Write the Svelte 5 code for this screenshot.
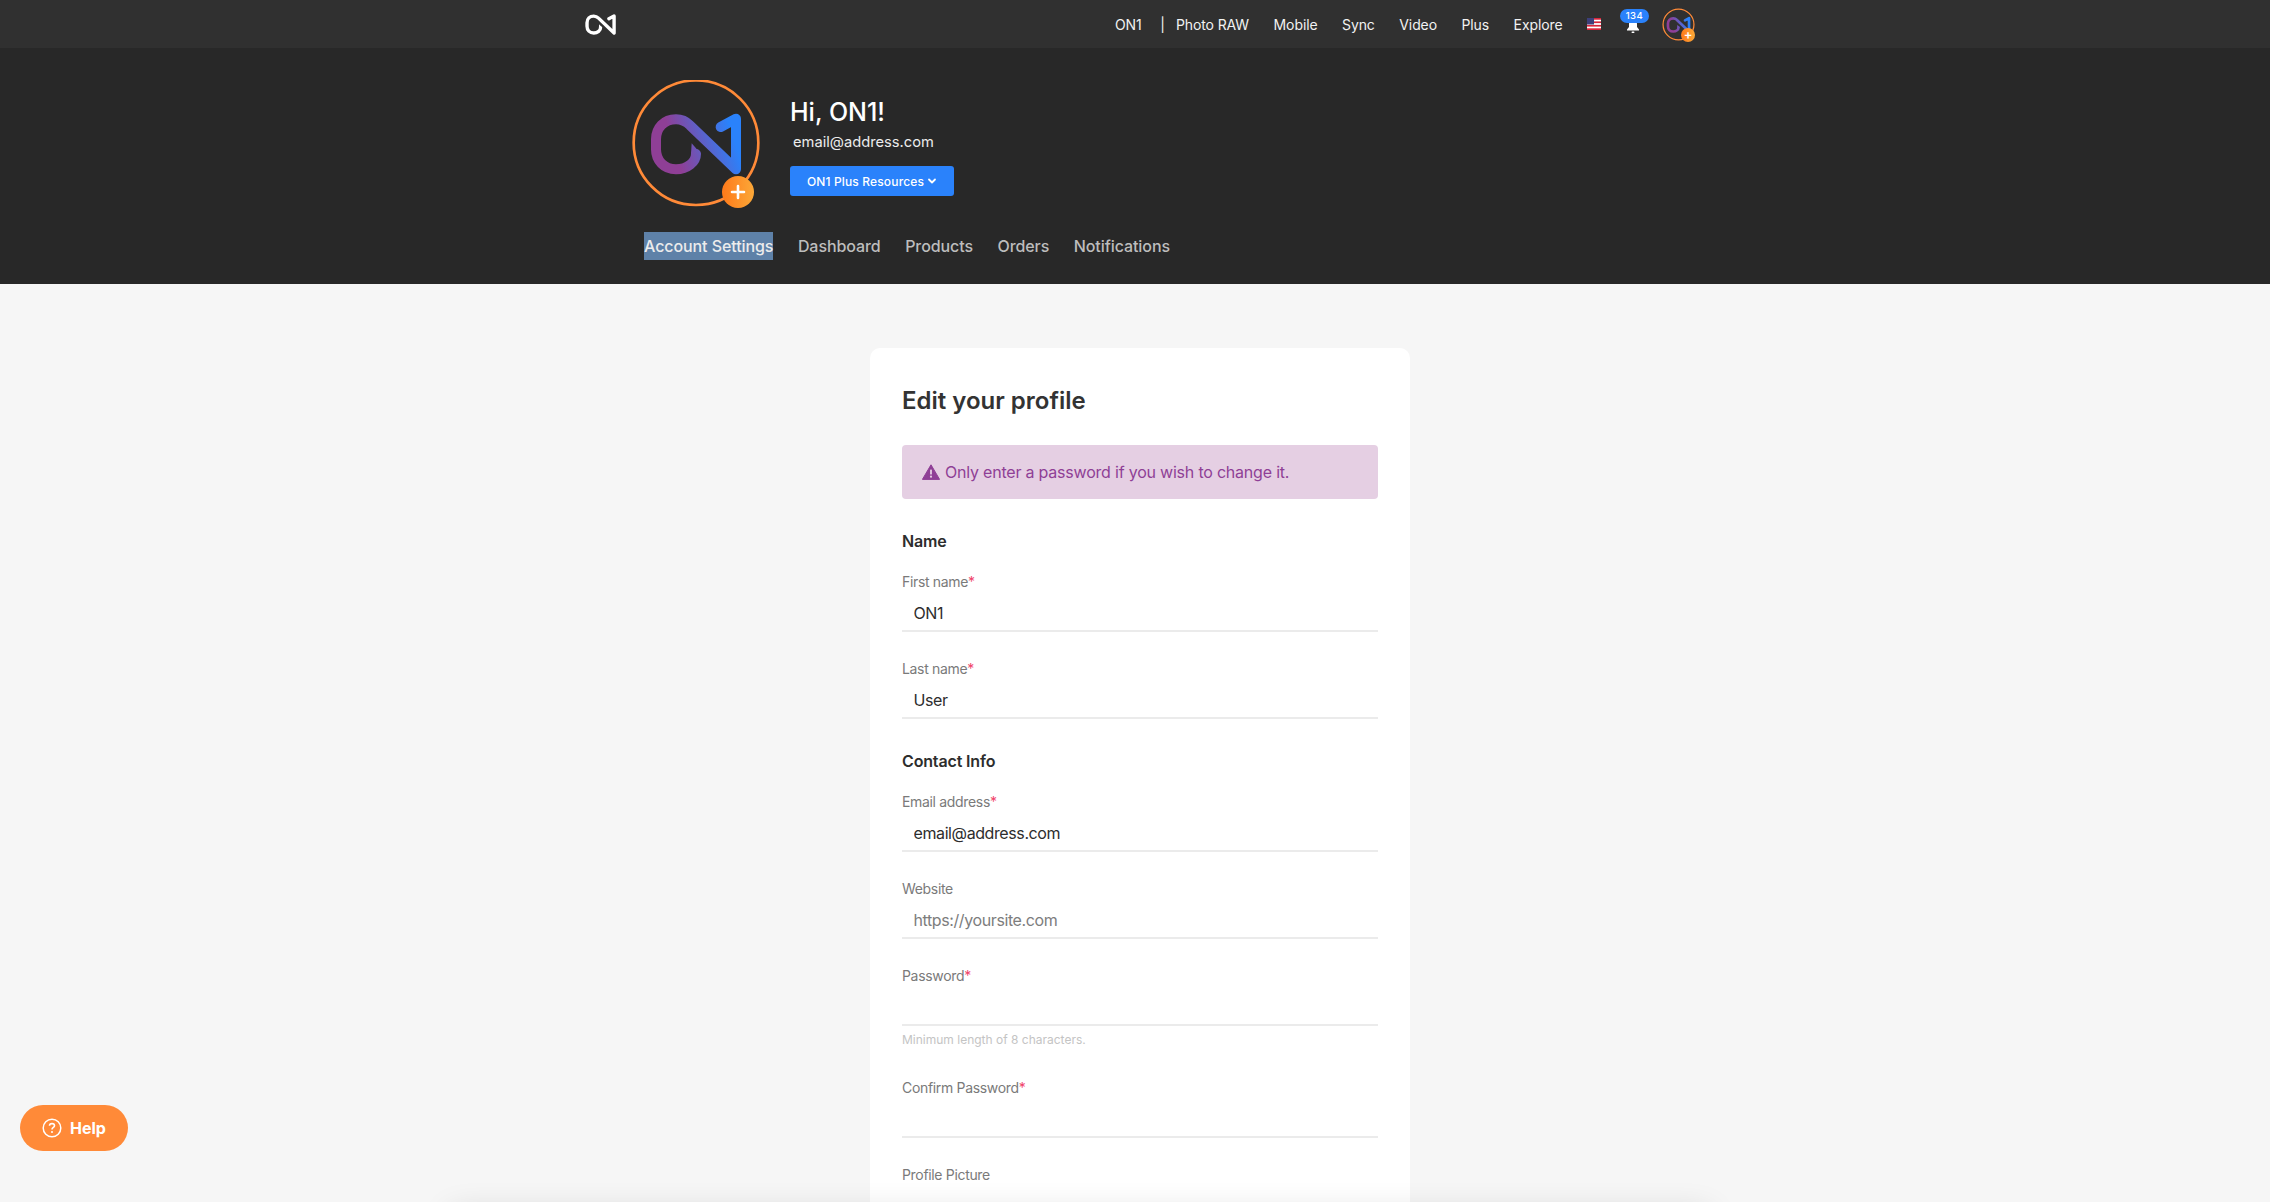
<script>
  const topLinks = ['Photo RAW', 'Mobile', 'Sync', 'Video', 'Plus', 'Explore'];
  const tabs = ['Dashboard', 'Products', 'Orders', 'Notifications'];
</script>

{#snippet mark(id, stroke)}
  <defs>
    <linearGradient id={id} gradientUnits="userSpaceOnUse" x1="225" y1="270" x2="395" y2="215">
      <stop offset="0" stop-color="#8f3f96" />
      <stop offset="1" stop-color="#2a82fb" />
    </linearGradient>
  </defs>
  <path d="M288 282C288 306 262 328 228 328C192 328 168 302 168 268V238C168 204 192 178 228 178C245 178 258 184 270 196L408 328V176L362 201" fill="none" stroke={stroke ?? `url(#${id})`} stroke-width="30" stroke-linecap="round" stroke-linejoin="round" />
  <path d="M273 284L275 250L303 282Z" fill={stroke ?? `url(#${id})`} />
{/snippet}

<div class="page">
  <header class="topbar">
    <div class="container top-inner">
      <svg class="top-logo" viewBox="150 160 275 185" aria-label="ON1">
        {@render mark('g0', '#fff')}
      </svg>
      <nav class="top-nav">
        <a href="#a" class="first">ON1</a>
        <span class="pipe">|</span>
        {#each topLinks as link}
          <a href="#a">{link}</a>
        {/each}
        <svg class="flag" viewBox="0 0 14 12">
          <rect width="14" height="12" fill="#fff" />
          <rect y="0" width="14" height="1.7" fill="#d8243a" />
          <rect y="3.4" width="14" height="1.7" fill="#d8243a" />
          <rect y="6.9" width="14" height="1.7" fill="#d8243a" />
          <rect y="10.3" width="14" height="1.7" fill="#d8243a" />
          <rect width="7" height="6.5" fill="#3c3f7a" />
        </svg>
        <span class="bell">
          <svg viewBox="0 0 14 16">
            <path d="M7 1.5C4.3 1.5 3 3.6 3 6V9L1 11.5V12.5H13V11.5L11 9V6C11 3.6 9.700 1.500 7 1.500Z" fill="#fff" />
            <rect x="5.500" y="13.500" width="3" height="1.500" rx=".7" fill="#fff" />
          </svg>
          <span class="count">134</span>
        </span>
        <span class="mini">
          <svg viewBox="100 60 376 376">
            <circle cx="288" cy="248" r="176" fill="none" stroke="#ff8a38" stroke-width="14" />
            {@render mark('g1')}
          </svg>
          <span class="mini-plus">+</span>
        </span>
      </nav>
    </div>
  </header>

  <section class="hero">
    <div class="container">
      <div class="profile">
        <div class="avatar">
          <svg viewBox="96 60 384 384">
            <circle cx="288" cy="248" r="187" fill="none" stroke="#ff8a38" stroke-width="8" />
            {@render mark('g2')}
          </svg>
          <span class="avatar-plus">
            <svg viewBox="0 0 16 16"><path d="M8 2V14M2 8H14" stroke="#fff" stroke-width="2.600" stroke-linecap="round" /></svg>
          </span>
        </div>
        <div class="who">
          <h1>Hi, ON1!</h1>
          <p>email@address.com</p>
          <button class="resources">
            ON1 Plus Resources
            <svg viewBox="0 0 10 10"><path d="M2 3.500L5 6.500L8 3.500" fill="none" stroke="#fff" stroke-width="1.800" stroke-linecap="round" stroke-linejoin="round" /></svg>
          </button>
        </div>
      </div>
      <nav class="tabs">
        <a href="#a" class="active">Account Settings</a>
        {#each tabs as tab}
          <a href="#a">{tab}</a>
        {/each}
      </nav>
    </div>
  </section>

  <main>
    <form class="card">
      <h2>Edit your profile</h2>
      <div class="alert">
        <svg viewBox="0 0 18 16">
          <path d="M9 .8L17.600 15.400H.4Z" fill="#8f3f96" stroke="#8f3f96" stroke-width="1" stroke-linejoin="round" />
          <rect x="8.100" y="5.500" width="1.800" height="5" rx=".6" fill="#e5cfe3" />
          <circle cx="9" cy="12.700" r="1.100" fill="#e5cfe3" />
        </svg>
        Only enter a password if you wish to change it.
      </div>

      <h3>Name</h3>
      <div class="field"><label for="f1">First name<i>*</i></label><input id="f1" value="ON1" /></div>
      <div class="field"><label for="f2">Last name<i>*</i></label><input id="f2" value="User" /></div>

      <h3 class="next">Contact Info</h3>
      <div class="field"><label for="f3">Email address<i>*</i></label><input id="f3" value="email@address.com" /></div>
      <div class="field"><label for="f4">Website</label><input id="f4" placeholder="https://yoursite.com" /></div>
      <div class="field hinted">
        <label for="f5">Password<i>*</i></label><input id="f5" type="password" />
        <small>Minimum length of 8 characters.</small>
      </div>
      <div class="field"><label for="f6">Confirm Password<i>*</i></label><input id="f6" type="password" /></div>
      <div class="field"><label for="f7">Profile Picture</label></div>
    </form>
  </main>

  <div class="bottom-shade"></div>

  <button class="help">
    <svg viewBox="0 0 20 20">
      <circle cx="10" cy="10" r="8.800" fill="none" stroke="#fff" stroke-width="1.500" />
      <path d="M7.500 7.800C7.500 6.400 8.600 5.600 10 5.600C11.400 5.600 12.500 6.400 12.500 7.700C12.500 9.400 10 9.400 10 11.400" fill="none" stroke="#fff" stroke-width="1.600" />
      <circle cx="10" cy="14" r="1" fill="#fff" />
    </svg>
    Help
  </button>
</div>

<style>
  :global(body) {
    margin: 0;
    background: #f6f6f6;
    font-family: Inter, "Liberation Sans", sans-serif;
    color: #2d2d2d;
  }
  .page {
    height: 1202px;
    overflow: hidden;
    position: relative;
  }
  .container {
    width: 1110px;
    margin: 0 auto;
    position: relative;
    left: 5px;
  }
  a {
    color: inherit;
    text-decoration: none;
  }

  .topbar {
    height: 48px;
    background: #303030;
    color: #f2f2f2;
  }
  .top-inner {
    height: 48px;
    display: flex;
    align-items: center;
    justify-content: space-between;
  }
  .top-logo {
    width: 31px;
    height: 21px;
    display: block;
  }
  .top-nav {
    display: flex;
    align-items: center;
    font-size: 14px;
    letter-spacing: -.1px;
    gap: 24.500px;
  }
  .first {
    margin-right: -6px;
  }
  .pipe {
    margin-right: -13.300px;
  }
  .flag {
    width: 14px;
    height: 12px;
    display: block;
    margin-top: -1px;
  }
  .bell {
    position: relative;
    display: block;
    width: 14px;
    height: 16px;
    margin: 3px 6px 0 0;
  }
  .bell svg {
    display: block;
    width: 14px;
    height: 16px;
  }
  .count {
    position: absolute;
    left: -5.500px;
    top: -8.500px;
    width: 29px;
    height: 14px;
    line-height: 14px;
    border-radius: 7px;
    background: #2a82fb;
    color: #fff;
    font-size: 9.500px;
    font-weight: 500;
    letter-spacing: .5px;
    text-align: center;
  }
  .mini {
    position: relative;
    display: block;
    width: 33px;
    height: 33px;
    margin-left: -8px;
  }
  .mini svg {
    display: block;
    width: 33px;
    height: 33px;
  }
  .mini-plus {
    position: absolute;
    left: 19px;
    top: 20px;
    width: 14px;
    height: 14px;
    border-radius: 50%;
    background: linear-gradient(90deg, #ff7a1a, #fba838);
    color: #fff;
    font-size: 13px;
    font-weight: 600;
    line-height: 13px;
    text-align: center;
  }

  .hero {
    height: 236px;
    background: #282828;
    color: #fff;
  }
  .profile {
    display: flex;
    padding: 32px 0 0 47px;
    height: 128px;
  }
  .avatar {
    position: relative;
    width: 128px;
    height: 128px;
    margin-right: 30px;
  }
  .avatar svg {
    display: block;
    width: 128px;
    height: 128px;
  }
  .avatar-plus {
    position: absolute;
    left: 90px;
    top: 96px;
    width: 32px;
    height: 32px;
    border-radius: 50%;
    background: linear-gradient(90deg, #ff7a1a, #fba838);
    display: flex;
    align-items: center;
    justify-content: center;
  }
  .avatar-plus svg {
    width: 16px;
    height: 16px;
  }
  .who h1 {
    margin: 0;
    padding-top: 16px;
    font-size: 25px;
    line-height: 32px;
    font-weight: 500;
  }
  .who p {
    margin: 4px 0 0 3px;
    font-size: 14.700px;
    line-height: 20px;
    color: #ececec;
  }
  .resources {
    margin-top: 14px;
    width: 164px;
    height: 30px;
    padding: 0;
    border: 0;
    border-radius: 3px;
    background: #2a82fb;
    color: #fff;
    font: 500 12px Inter, sans-serif;
    letter-spacing: .15px;
    display: flex;
    align-items: center;
    justify-content: center;
    gap: 3px;
  }
  .resources svg {
    width: 10px;
    height: 10px;
  }
  .tabs {
    display: flex;
    gap: 24.500px;
    padding-left: 59px;
    margin-top: 24px;
    font-size: 16px;
    letter-spacing: -.08px;
    font-weight: 500;
    line-height: 28px;
    color: #bdbdbd;
  }
  .active {
    background: #5e81a8;
    color: #ececec;
  }

  main {
    display: flex;
    justify-content: center;
    padding: 64px 0 0 10px;
  }
  .card {
    box-sizing: border-box;
    width: 540px;
    padding: 37px 32px 32px;
    background: #fff;
    border-radius: 10px;
  }
  h2 {
    margin: 0 0 28px;
    font-size: 24px;
    line-height: 32px;
    font-weight: 600;
    color: #333;
  }
  .alert {
    height: 54px;
    box-sizing: border-box;
    padding-left: 20px;
    display: flex;
    align-items: center;
    gap: 5px;
    border-radius: 4px;
    background: #e5cfe3;
    color: #8f3f96;
    font-size: 16px;
    letter-spacing: -.21px;
    margin-bottom: 31px;
  }
  .alert svg {
    width: 18px;
    height: 16px;
  }
  h3 {
    margin: 0 0 20px;
    font-size: 16px;
    letter-spacing: -.15px;
    line-height: 22px;
    font-weight: 600;
  }
  h3.next {
    margin-top: 31px;
  }
  .field {
    margin-bottom: 27px;
  }
  .field.hinted {
    margin-bottom: 30px;
  }
  label {
    display: block;
    font-size: 14px;
    letter-spacing: -.33px;
    line-height: 20px;
    color: #7a7a7a;
  }
  label i {
    color: #f0436a;
    font-style: normal;
  }
  input {
    display: block;
    box-sizing: border-box;
    width: 100%;
    height: 40px;
    padding: 3px 12px 0 11.500px;
    border: 0;
    border-bottom: 2px solid #ebebeb;
    outline: none;
    background: transparent;
    font: 400 16px Inter, sans-serif;
    letter-spacing: -.4px;
    color: #2d2d2d;
  }
  input::placeholder {
    color: #7d7d7d;
    opacity: 1;
  }
  small {
    display: block;
    margin-top: 6px;
    font-size: 12px;
    line-height: 16px;
    color: #c4c4c4;
  }

  .bottom-shade {
    position: absolute;
    left: 460px;
    width: 1240px;
    top: 1222px;
    height: 40px;
    box-shadow: 0 0 32px 10px rgba(0, 0, 0, .14);
  }

  .help {
    position: absolute;
    left: 20px;
    top: 1105px;
    width: 108px;
    height: 46px;
    border: 0;
    padding: 0;
    border-radius: 23px;
    background: #ff8a38;
    color: #fff;
    font: 700 16px Inter, sans-serif;
    display: flex;
    align-items: center;
    justify-content: center;
    gap: 8px;
  }
  .help svg {
    width: 20px;
    height: 20px;
  }
</style>
